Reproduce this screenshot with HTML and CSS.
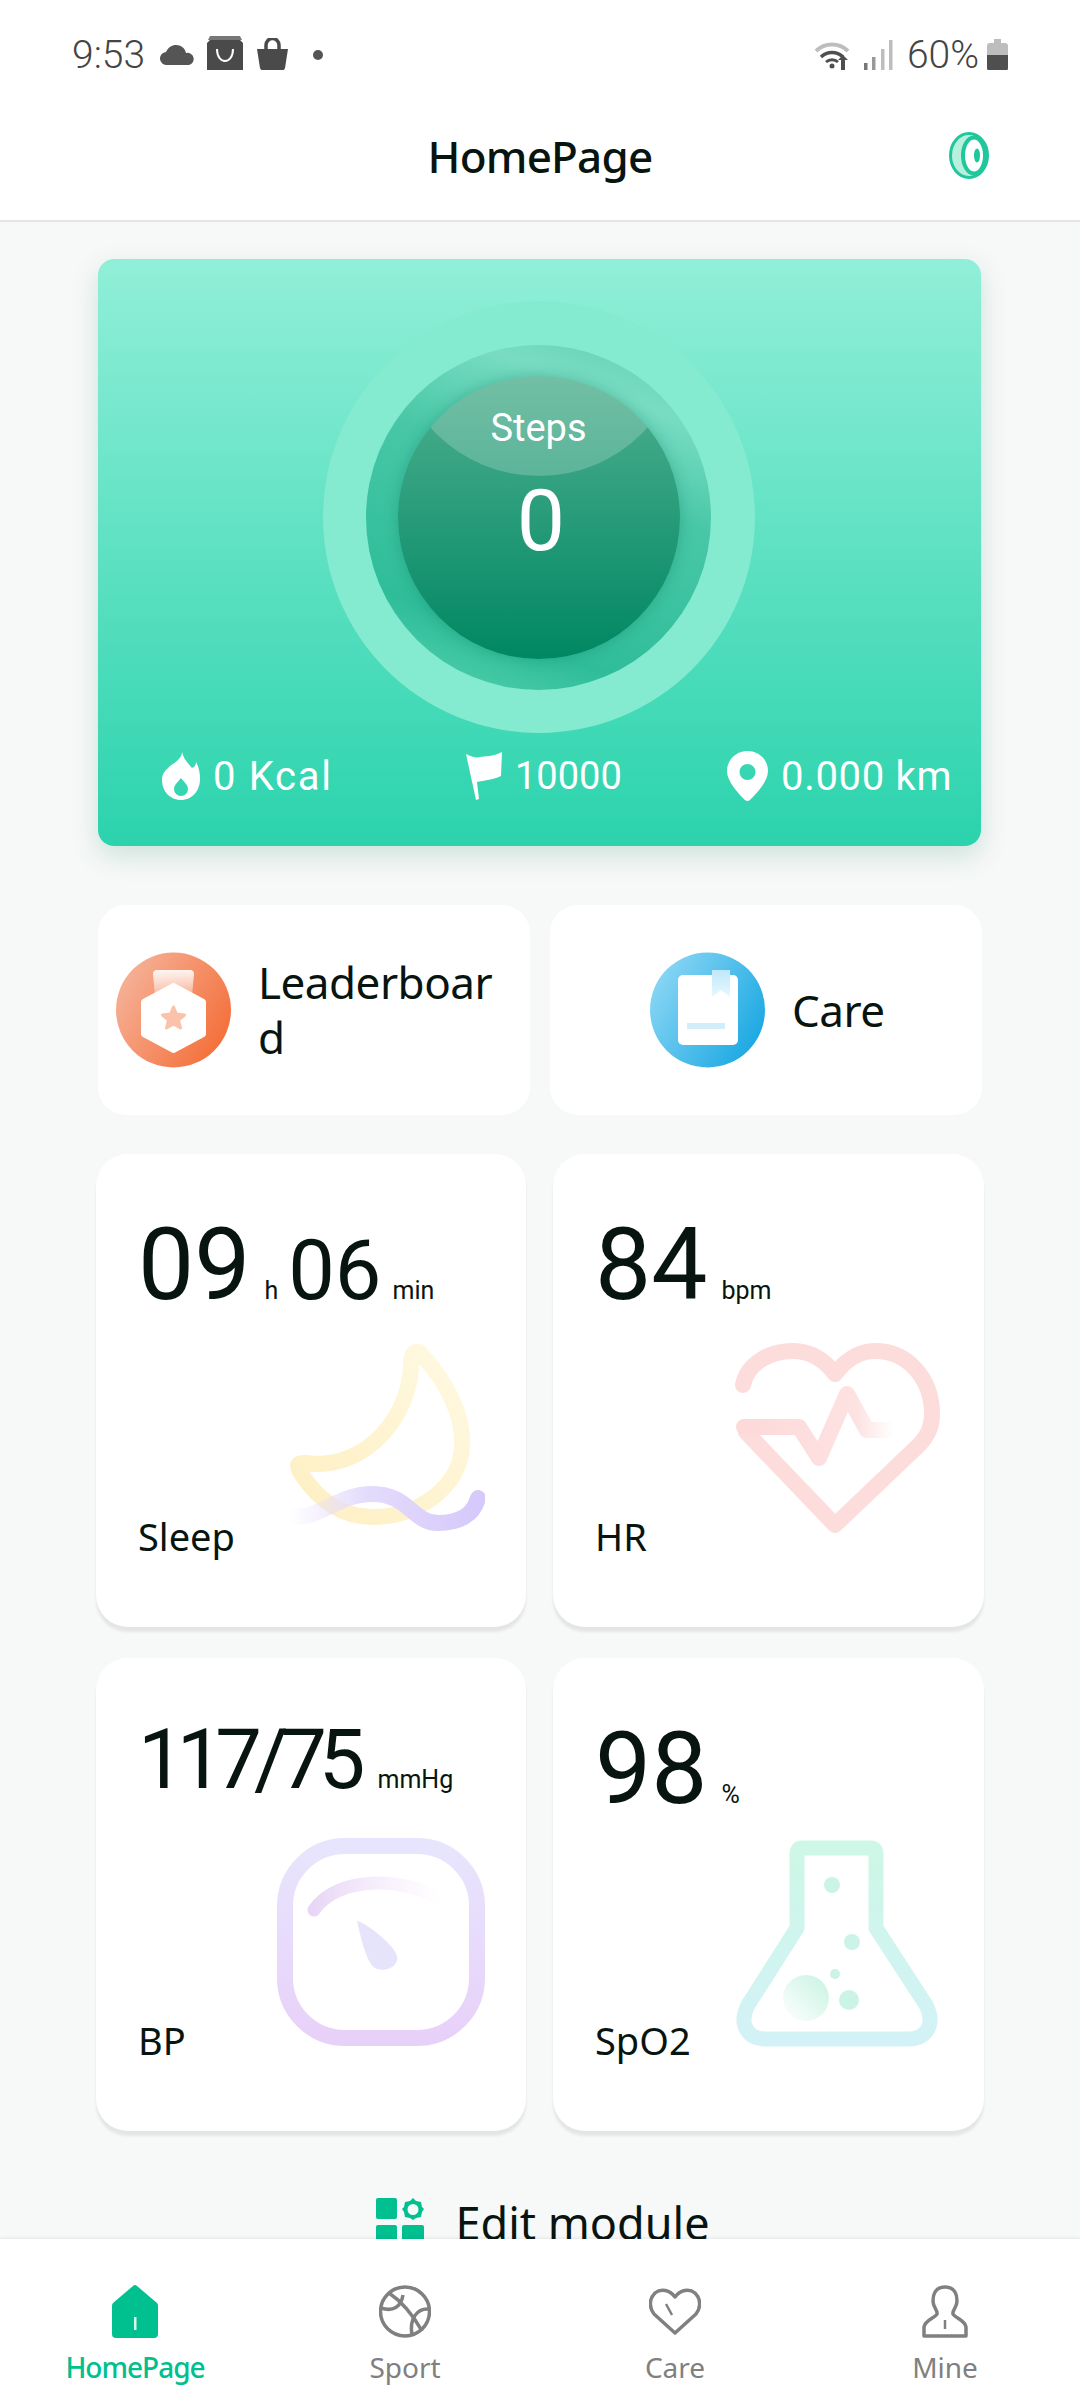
FILE: index.html
```html
<!DOCTYPE html>
<html lang="en">
<head>
    <meta charset="UTF-8">
    <meta name="viewport" content="width=device-width, initial-scale=1.0">
    <title>HomePage</title>
    <link rel="stylesheet" href="styles.css">
</head>
<body>
    <div class="status">
        <div class="status-left">
            <span class="time">9:53</span>
            <svg class="s-cloud" width="35" height="20" viewBox="0 0 35 20"><path fill="#555" d="M7 20a6.500 6.500 0 0 1-1-13C8 2.500 12 0 16 0c5 0 9 3 10 8a6 6 0 0 1 3 12z"/></svg>
            <svg class="s-shop" width="36" height="37" viewBox="0 0 36 37"><path fill="#4a4a4a" d="M3 4h30l3 3v28q0 2-2 2H2q-2 0-2-2V7z"/><path fill="#777" d="M3 0h30l2 4H1z"/><path d="M10 13c0 16 16 16 16 0" fill="none" stroke="#fff" stroke-width="2"/></svg>
            <svg class="s-bag" width="31" height="33" viewBox="0 0 31 33"><path fill="#4a4a4a" d="M0 11h31l-3 19q-1 3-4 3H7q-3 0-4-3z"/><path d="M9 12V7a6.500 6.500 0 0 1 13 0v5" fill="none" stroke="#4a4a4a" stroke-width="3.500"/></svg>
            <span class="dot"></span>
        </div>
        <div class="status-right">
            <svg width="40" height="30" viewBox="0 0 40 30"><path d="M2 11a23 23 0 0 1 32 0" fill="none" stroke="#bdbdbd" stroke-width="4"/><path d="M7 17a16 16 0 0 1 22 0" fill="none" stroke="#4f4f4f" stroke-width="3.500"/><path d="M12 22a9 9 0 0 1 12 0" fill="none" stroke="#4f4f4f" stroke-width="3"/><circle cx="18" cy="26" r="2.500" fill="#4f4f4f"/><path d="M27 30V20h-3l5-5 5 5h-3v10z" fill="#4f4f4f"/></svg>
            <svg class="s-signal" width="29" height="30" viewBox="0 0 29 30"><rect x="0" y="23" width="3.500" height="7" fill="#777"/><rect x="8" y="17" width="3.500" height="13" fill="#999"/><rect x="17" y="9" width="3.500" height="21" fill="#bdbdbd"/><rect x="25" y="0" width="3.500" height="30" fill="#bdbdbd"/></svg>
            <span class="pct">60%</span>
            <svg width="21" height="32" viewBox="0 0 21 32"><path fill="#bdbdbd" d="M7 0h7v4h4q3 0 3 3v9H0V7q0-3 3-3h4z"/><path fill="#4f4f4f" d="M0 16h21v13q0 3-3 3H3q-3 0-3-3z"/></svg>
        </div>
    </div>

    <div class="appbar">
        <h1>HomePage</h1>
        <svg class="ring" width="41" height="47" viewBox="0 0 41 47"><ellipse cx="20" cy="23.500" rx="18.500" ry="22" fill="#b8f0de" stroke="#20c79c" stroke-width="3"/><ellipse cx="25" cy="23.500" rx="11" ry="18" fill="#fff" stroke="#20c79c" stroke-width="4"/><ellipse cx="28" cy="23.500" rx="3" ry="7" fill="#20c79c"/></svg>
    </div>

    <div class="main">
        <div class="hero">
            <div class="halo">
                <div class="dial">
                    <div class="core">
                        <div class="core-title">Steps</div>
                        <div class="core-num">0</div>
                    </div>
                </div>
            </div>
            <div class="hero-stats">
                <div class="stat stat-kcal">
                    <svg width="38" height="48" viewBox="0 0 38 48"><path fill="#fff" fill-rule="evenodd" d="M20 0c2 8 6 11 10 16 3-1 4-4 4-6 3 5 4 11 4 17 0 12-8 21-19 21S0 39 0 28c0-7 4-10 8-14 6-4 12-8 12-14zM19 26c-3 4-7 7-7 11a7 7 0 0 0 14 0c0-4-4-7-7-11z"/></svg>
                    <span>0 Kcal</span>
                </div>
                <div class="stat stat-goal">
                    <svg width="36" height="48" viewBox="0 0 36 48"><path fill="#fff" d="M0 2c6 3 10 4 14 3s13 0 22-5l-1 24c-6 3-14 4-24 6l2 17-3 1z"/></svg>
                    <span>10000</span>
                </div>
                <div class="stat stat-dist">
                    <svg width="41" height="50" viewBox="0 0 41 50"><path fill="#fff" fill-rule="evenodd" d="M20.500 0C32 0 41 9 41 20c0 11-13 24-18 29q-2.500 2-5 0C13 44 0 31 0 20 0 9 9 0 20.500 0zm0 13a8 8 0 1 0 0 16 8 8 0 0 0 0-16z"/></svg>
                    <span>0.000 km</span>
                </div>
            </div>
        </div>

        <div class="shortcuts">
            <div class="shortcut shortcut-left">
                <svg width="115" height="116" viewBox="0 0 115 116">
                    <defs>
                        <linearGradient id="orange" x1="0" y1="0.1" x2="1" y2="0.7"><stop offset="0" stop-color="#f6b7a0"/><stop offset="1" stop-color="#f46f39"/></linearGradient>
                        <linearGradient id="ribbon" x1="0" y1="0" x2="0" y2="1"><stop offset="0" stop-color="#fff" stop-opacity=".9"/><stop offset="1" stop-color="#fff" stop-opacity=".3"/></linearGradient>
                    </defs>
                    <circle cx="57.500" cy="58" r="57.500" fill="url(#orange)"/>
                    <path fill="url(#ribbon)" d="M41 18h33q4 0 4 4l-2 22H39l-2-22q0-4 4-4z"/>
                    <path fill="#fff" d="M55 32q2.500-2 5 0l28 15q2 1 2 3v32q0 2-2 3L60 100q-2.500 2-5 0L27 85q-2-1-2-3V50q0-2 2-3z"/>
                    <path fill="#fbc2ab" stroke="#fbc2ab" stroke-width="3" stroke-linejoin="round" d="M57.500 55l3 7 8 1-6 5 2 8-7-4-7 4 2-8-6-5 8-1z"/>
                </svg>
                <span class="shortcut-text">Leaderboard</span>
            </div>
            <div class="shortcut shortcut-right">
                <svg width="115" height="116" viewBox="0 0 115 116">
                    <defs>
                        <linearGradient id="blue" x1="0" y1="0.1" x2="1" y2="0.7"><stop offset="0" stop-color="#93daf6"/><stop offset="1" stop-color="#1ba8e2"/></linearGradient>
                        <linearGradient id="mark" x1="0" y1="0" x2="0" y2="1"><stop offset="0" stop-color="#bfe8fa"/><stop offset="1" stop-color="#e9f8fe"/></linearGradient>
                    </defs>
                    <circle cx="57.500" cy="58" r="57.500" fill="url(#blue)"/>
                    <rect x="28" y="23" width="60" height="70" rx="5" fill="#fff"/>
                    <path fill="url(#mark)" d="M62 18h18v27l-9-7-9 7z"/>
                    <rect x="37" y="71" width="38" height="6" fill="#d2eefa"/>
                </svg>
                <span class="shortcut-text">Care</span>
            </div>
        </div>

        <div class="metrics">
            <div class="metric">
                <div class="val">09<small>h</small><b>06</b><small class="min">min</small></div>
                <div class="metric-label">Sleep</div>
                <svg class="art art-sleep" width="197" height="191" viewBox="0 0 197 191">
                    <defs>
                        <linearGradient id="moon" x1="1" y1="0" x2="0" y2="1"><stop offset="0" stop-color="#fff9e2"/><stop offset="1" stop-color="#feefc2"/></linearGradient>
                        <linearGradient id="wave" x1="0" y1="0" x2="1" y2="0"><stop offset="0" stop-color="#e4dcfc" stop-opacity="0"/><stop offset=".4" stop-color="#e4dcfc"/><stop offset="1" stop-color="#d6c9fb"/></linearGradient>
                    </defs>
                    <path d="M17 121C80 130 124 70 123 20 Q124 8 131 10C160 40 176 75 174 105 172 145 130 175 85 175 50 175 28 155 12 130 8 122 10 121 17 121Z" fill="none" stroke="url(#moon)" stroke-width="16" stroke-linejoin="round"/>
                    <path d="M2 175C32 178 48 152 85 152 120 152 125 181 150 181 172 181 186 172 190 156" fill="none" stroke="url(#wave)" stroke-width="16" stroke-linecap="round"/>
                </svg>
            </div>
            <div class="metric">
                <div class="val">84<small>bpm</small></div>
                <div class="metric-label">HR</div>
                <svg class="art art-heart" width="206" height="191" viewBox="0 0 206 191">
                    <defs>
                        <linearGradient id="pulse" x1="0" y1="0" x2="1" y2="0"><stop offset="0" stop-color="#fdd9d9"/><stop offset=".75" stop-color="#fde2e2"/><stop offset="1" stop-color="#fde2e2" stop-opacity="0"/></linearGradient>
                    </defs>
                    <path d="M9 43C13 22 35 9 59 9 78 9 92 20 101 32 110 20 124 9 141 9 175 9 198 38 198 72 198 85 194 93 186 102L101 183 12 90" fill="none" stroke="#fddcdc" stroke-width="16" stroke-linecap="round" stroke-linejoin="round"/>
                    <path d="M10 85H65L85 116 113 52 133 88H160" fill="none" stroke="url(#pulse)" stroke-width="16" stroke-linecap="round" stroke-linejoin="round"/>
                </svg>
            </div>
            <div class="metric metric-bp">
                <div class="val"><b>117/75</b><small>mmHg</small></div>
                <div class="metric-label">BP</div>
                <svg class="art art-bp" width="208" height="208" viewBox="0 0 208 208">
                    <defs>
                        <linearGradient id="gauge" x1="0" y1="0" x2="0" y2="1"><stop offset="0" stop-color="#e7e5fd"/><stop offset="1" stop-color="#e8d1f9"/></linearGradient>
                        <linearGradient id="arc" x1="0" y1="0" x2="1" y2="0"><stop offset="0" stop-color="#e8d6f6"/><stop offset="1" stop-color="#f3e6fa" stop-opacity="0"/></linearGradient>
                    </defs>
                    <rect x="8" y="8" width="192" height="192" rx="60" fill="none" stroke="url(#gauge)" stroke-width="16"/>
                    <path d="M37 72C60 38 125 38 165 62" fill="none" stroke="url(#arc)" stroke-width="13" stroke-linecap="round"/>
                    <path fill="#e5e4fb" d="M80 83C90 85 118 108 120 118 122 128 110 134 100 131 90 128 84 100 80 83Z"/>
                </svg>
            </div>
            <div class="metric metric-spo">
                <div class="val">98<small>%</small></div>
                <div class="metric-label">SpO2</div>
                <svg class="art art-flask" width="202" height="207" viewBox="0 0 202 207">
                    <defs>
                        <linearGradient id="flask" x1="0" y1="0" x2="0" y2="1"><stop offset="0" stop-color="#cdf7e6"/><stop offset="1" stop-color="#d3f2f7"/></linearGradient>
                        <linearGradient id="bubble" x1="1" y1="0" x2="0" y2="1"><stop offset="0" stop-color="#c7f3e2"/><stop offset="1" stop-color="#fff"/></linearGradient>
                    </defs>
                    <path d="M66 8H135Q140 8 140 14V88L190 165C200 185 190 199 172 199H30C12 199 2 185 12 165L61 88V14Q61 8 66 8Z" fill="none" stroke="url(#flask)" stroke-width="15" stroke-linejoin="round"/>
                    <circle cx="96" cy="45" r="8" fill="#cbf3e8"/>
                    <circle cx="116" cy="102" r="8" fill="#cbf3e8"/>
                    <circle cx="99" cy="134" r="5" fill="#cbf3e8"/>
                    <circle cx="113" cy="160" r="10" fill="#cbf3e8"/>
                    <circle cx="70" cy="158" r="23" fill="url(#bubble)"/>
                </svg>
            </div>
        </div>

        <div class="edit">
            <svg width="48" height="48" viewBox="0 0 48 48"><rect width="21" height="21" rx="2" fill="#00c08f"/><rect y="27" width="21" height="21" rx="2" fill="#00c08f"/><rect x="26" y="27" width="22" height="21" rx="2" fill="#00c08f"/><path fill="#00c08f" fill-rule="evenodd" d="M37 0l3 3 5 1 1 5 2 2-2 3-1 5-5 1-3 2-3-2-5-1-1-5-2-3 2-2 1-5 5-1zm0 6a5.500 5.500 0 1 0 0 11 5.500 5.500 0 0 0 0-11z"/></svg>
            <span>Edit module</span>
        </div>
    </div>

    <div class="nav">
        <div class="tab active">
            <svg width="46" height="53" viewBox="0 0 46 53"><path fill="#00c08f" d="M21 1q2-2 4 0L45 18q1 1 1 3v28q0 4-4 4H4q-4 0-4-4V21q0-2 1-3z"/><rect x="22" y="32" width="2.500" height="13" fill="#d8f6ee"/></svg>
            <span>HomePage</span>
        </div>
        <div class="tab">
            <svg width="52" height="53" viewBox="0 0 52 53" fill="none" stroke="#808080" stroke-width="3.500"><circle cx="26" cy="26.500" r="24.500"/><path d="M10 8C22 16 34 30 43 46"/><path d="M2 23C14 27 22 22 24 10"/><path d="M50 24C38 23 30 34 33 50"/></svg>
            <span>Sport</span>
        </div>
        <div class="tab">
            <svg width="52" height="47" viewBox="0 0 52 47" fill="none" stroke="#808080" stroke-width="3.500" stroke-linejoin="round"><path d="M26 9C21 2 12 0 6 5-1 12 1 21 5 26L26 45 47 26C51 21 53 12 46 5 40 0 31 2 26 9Z"/><path d="M17 16L23 27" stroke-width="2.500"/></svg>
            <span>Care</span>
        </div>
        <div class="tab">
            <svg width="46" height="53" viewBox="0 0 46 53" fill="none" stroke="#808080" stroke-width="3.500" stroke-linejoin="round"><path d="M23 2C13 2 11 10 11 16 11 23 16 25 15 29 13 33 3 35 2 42V51H44V42C43 35 33 33 31 29 30 25 35 23 35 16 35 10 33 2 23 2Z"/><path d="M23 35V44" stroke-width="2.500"/></svg>
            <span>Mine</span>
        </div>
    </div>
</body>
</html>
```
FILE: styles.css
```css
*{
    padding: 0;
    margin: 0;
    box-sizing: border-box;
    font-family: "Noto Sans", sans-serif;
}
body{
    width: 1080px;
    height: 2400px;
    display: flex;
    flex-direction: column;
    background-color: #f7f8f8;
    color: #08140f;
    overflow: hidden;
}
svg{
    display: block;
    flex-shrink: 0;
}

/* status bar */
.status{
    height: 70px;
    padding: 36px 72px 0 72px;
    background-color: #fff;
    display: flex;
    justify-content: space-between;
    align-items: flex-start;
}
.status-left, .status-right{
    display: flex;
    align-items: center;
    height: 37px;
}
.time, .pct{
    font-family: "Roboto", sans-serif;
    font-weight: 300;
    font-size: 39px;
    color: #444;
}
.s-cloud{ margin-left: 15px; }
.s-shop{ margin-left: 12px; }
.s-bag{ margin-left: 14px; }
.dot{
    width: 10px;
    height: 10px;
    margin-left: 25px;
    border-radius: 50%;
    background-color: #555;
}
.s-signal{ margin-left: 10px; }
.pct{ margin: 0 8px 0 14px; }

/* header */
.appbar{
    height: 152px;
    background-color: #fff;
    border-bottom: 2px solid #e4e6e6;
    display: flex;
    justify-content: center;
    align-items: center;
    position: relative;
}
h1{
    font-size: 44px;
    font-weight: 500;
    letter-spacing: -0.8px;
    line-height: 60px;
    margin-top: 21px;
}
.ring{
    position: absolute;
    left: 949px;
    top: 62px;
}

.main{
    flex: 1;
    min-height: 0;
    overflow: hidden;
    padding-top: 37px;
}

/* steps card */
.hero{
    width: 883px;
    height: 587px;
    margin-left: 98px;
    padding-top: 42px;
    border-radius: 16px;
    background: linear-gradient(180deg, #91efd8, #2bd3ad);
    box-shadow: 0 10px 26px rgba(60, 150, 125, 0.22);
    display: flex;
    flex-direction: column;
    align-items: center;
}
.halo{
    width: 432px;
    height: 432px;
    flex-shrink: 0;
    margin-left: -2px;
    border-radius: 50%;
    background-color: #84ead0;
    display: flex;
    justify-content: center;
    align-items: center;
}
.dial{
    width: 345px;
    height: 345px;
    border-radius: 50%;
    background: linear-gradient(200deg, #5fcdb1 0%, #78dcc3 18%, #48c7a7 40%, #2fbd99 78%, #5ad3b3 100%);
    display: flex;
    justify-content: center;
    align-items: center;
}
.core{
    width: 282px;
    height: 283px;
    border-radius: 50%;
    overflow: hidden;
    position: relative;
    color: #fff;
    text-align: center;
    background: linear-gradient(180deg, #4fb08f, #008763);
    box-shadow: 0 0 14px rgba(0, 110, 80, 0.3);
}
.core::before{
    content: "";
    position: absolute;
    left: -5px;
    top: -192px;
    width: 292px;
    height: 292px;
    border-radius: 50%;
    background-color: rgba(255, 255, 255, 0.2);
}
.core-title{
    position: relative;
    font-family: "Roboto", sans-serif;
    font-size: 38px;
    line-height: 40px;
    margin-top: 32px;
}
.core-num{
    position: relative;
    font-family: "Roboto", sans-serif;
    font-size: 86px;
    line-height: 100px;
    margin: 23px 0 0 5px;
}
.hero-stats{
    width: 100%;
    position: relative;
    flex: 1;
    color: #fff;
    font-family: "Roboto", sans-serif;
}
.stat{
    position: absolute;
    top: 19px;
    display: flex;
    align-items: center;
    gap: 13px;
    font-size: 38px;
    height: 48px;
}
.stat span{ font-family: "Roboto", sans-serif; }
.stat-kcal{ left: 64px; }
.stat-kcal span{ font-size: 40px; letter-spacing: 1.7px; }
.stat-goal{ left: 368px; }
.stat-dist{ left: 629px; }
.stat-dist span{ font-size: 40px; letter-spacing: 0.7px; }

/* leaderboard + care */
.shortcuts{
    display: flex;
    gap: 20px;
    margin: 59px 0 0 98px;
}
.shortcut{
    width: 432px;
    height: 210px;
    border-radius: 28px;
    background-color: #fff;
    display: flex;
    align-items: center;
    gap: 27px;
}
.shortcut-left{ padding-left: 18px; }
.shortcut-right{ padding-left: 100px; }
.shortcut-text{
    font-size: 44px;
    letter-spacing: -0.5px;
    line-height: 55px;
    width: 240px;
    word-break: break-all;
}

/* metric cards */
.metrics{
    display: grid;
    grid-template-columns: 430px 431px;
    grid-auto-rows: 473px;
    gap: 31px 27px;
    margin: 39px 0 0 96px;
}
.metric{
    position: relative;
    padding: 61px 0 65px 42px;
    border-radius: 32px;
    background-color: #fff;
    box-shadow: 0 5px 3px rgba(0, 0, 0, 0.08);
    display: flex;
    flex-direction: column;
}
.val{
    font-family: "Roboto", sans-serif;
    font-size: 100px;
    line-height: 100px;
    white-space: nowrap;
}
.val b{
    font-family: "Roboto", sans-serif;
    font-weight: 400;
    font-size: 83px;
}
.val small{
    font-family: "Roboto", sans-serif;
    font-size: 25px;
    margin: 0 10px 0 14px;
}
.val small.min{ margin-left: 11px; }
.metric-bp .val{ margin-top: -15px; }
.metric-bp .val b{ letter-spacing: -8px; }
.metric-bp .val small{ margin-left: 20px; }
.metric-label{
    margin-top: auto;
    font-size: 38px;
    line-height: 52px;
}
.art{ position: absolute; }
.art-sleep{ left: 192px; top: 188px; }
.art-heart{ left: 181px; top: 188px; }
.art-bp{ left: 181px; top: 180px; }
.art-flask{ left: 183px; top: 182px; }

.edit{
    display: flex;
    justify-content: center;
    align-items: flex-start;
    gap: 31px;
    margin: 67px 0 0 6px;
    font-size: 45px;
    line-height: 60px;
}
.edit span{ margin-top: -5px; }

/* bottom nav */
.nav{
    height: 161px;
    flex-shrink: 0;
    padding-top: 46px;
    background-color: #fff;
    box-shadow: 0 -1px 3px rgba(0, 0, 0, 0.08);
    display: grid;
    grid-template-columns: repeat(4, 270px);
    position: relative;
}
.tab{
    display: flex;
    flex-direction: column;
    align-items: center;
    font-size: 28px;
    color: #808080;
}
.tab svg{ height: 53px; }
.tab span{
    line-height: 38px;
    margin-top: 10px;
}
.tab.active{
    color: #00c08f;
    font-weight: 500;
    letter-spacing: -1px;
}
```
